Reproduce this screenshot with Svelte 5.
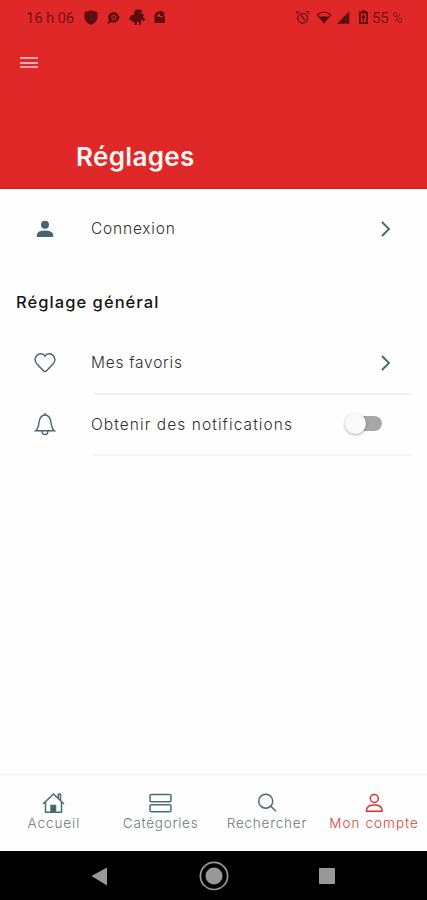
<script>
  const tabs = [
    { id: 'home', label: 'Accueil' },
    { id: 'categories', label: 'Catégories' },
    { id: 'search', label: 'Rechercher' },
    { id: 'account', label: 'Mon compte' }
  ];
  let active = $state('account');
  let notifications = $state(false);
</script>

{#snippet chevron()}
  <svg class="chevron" width="12" height="18" viewBox="0 0 12 18"><path d="M2 2L9 9L2 16" /></svg>
{/snippet}

<div class="screen">
  <header>
    <div class="status">
      <span class="time">16 h 06</span>
      <svg class="left-icons" width="86" height="18" viewBox="0 0 86 18">
        <path d="M7 1.3L13.5 3.3V8.5Q13 13.5 7 16Q1 13.5.5 8.5V3.3Z" />
        <path fill-rule="evenodd" d="M29.5 3A5.5 5.5 0 0 1 34.5 7L36 8L34.8 9.5A5.5 5.5 0 0 1 26.7 13L24 15L23.5 13.3L25 11.5A5.5 5.5 0 0 1 29.5 3ZM29.8 6A2.5 2.5 0 1 0 29.8 11A2.5 2.5 0 1 0 29.8 6Z" />
        <circle cx="29.8" cy="8.5" r="1.5" />
        <path d="M50 3L52 .7L57 .5L58.5 3L56 4L60 5.5L59 8L61.5 11L59 12L57 11L57 16H54.8L55 13H52.8L53 16H50.5L50.8 13L48.5 13L47.5 11.5L45 10.5L46.5 7L50 5.5Z" />
        <path fill-rule="evenodd" d="M72.5 3.2L77 1.7L80.5 4L80 6.5L81 8.5V14H70.5V6ZM74 5L73 8.5L75.5 7.5L78.5 9V7H76V5Z" />
      </svg>
      <span class="grow"></span>
      <svg class="right-icons" width="74" height="18" viewBox="0 0 74 18">
        <g fill="none" stroke="#7b1314" stroke-width="1.4">
          <circle cx="6.7" cy="9.3" r="4.9" />
          <path d="M1 5V2.6H4M12.4 5V2.6H9.4M5.3 6L8.3 10.5V12" />
          <path d="M21.3 6.1Q28 0 34.7 6.1L28 13.2Z" />
        </g>
        <path d="M23.3 8.2Q28 6.5 32.7 8.2L28 14.5Z" />
        <path d="M41 14.8L53.3 2.3V14.8Z" />
        <path fill-rule="evenodd" d="M65 1.5H70V2.7H72V15H63V2.7H65ZM64.8 4.5V13.3H70.2V4.5ZM67.4 5L69.5 8.2L68.3 9L68 13H66.8V10L65.5 8.8Z" />
      </svg>
      <span class="battery">55 <i>%</i></span>
    </div>
    <button class="menu" aria-label="Menu"><span></span><span></span><span></span></button>
    <h1>Réglages</h1>
  </header>

  <main>
    <div class="row login">
      <svg class="lead" width="20" height="20" viewBox="0 0 20 20"><circle cx="10" cy="5.8" r="4" fill="#456570" /><path d="M1.8 18V15.7Q2.8 11.5 10 11.5Q17.2 11.5 18.2 15.7V18Z" fill="#456570" /></svg>
      <span class="label connexion">Connexion</span>
      {@render chevron()}
    </div>
    <h2>Réglage général</h2>
    <div class="row ruled fav">
      <svg class="lead outline" width="22" height="22" viewBox="0 0 22 22"><path d="M11 4.2C9.5 1.2 5 1 2.6 3.7C.3 6.5 1 9.8 3.2 12.2L8.7 18Q11 21 13.3 18L18.8 12.2C21 9.8 21.7 6.5 19.4 3.7C17 1 12.5 1.2 11 4.2Z" /></svg>
      <span class="label favoris">Mes favoris</span>
      {@render chevron()}
    </div>
    <div class="row ruled notif">
      <svg class="lead outline" width="22" height="24" viewBox="0 0 22 24"><path d="M11 1V3M1.7 18.8C4.5 16.5 4.6 13.5 5 10.5C5.7 5.5 8 3 11 3S16.3 5.5 17 10.5C17.4 13.5 17.5 16.5 20.3 18.8ZM8 19C8.3 23.7 13.7 23.7 14 19" /></svg>
      <span class="label obtenir">Obtenir des notifications</span>
      <button class="switch" class:on={notifications} aria-label="Obtenir des notifications" onclick={() => (notifications = !notifications)}><span></span></button>
    </div>
  </main>

  <nav>
    {#each tabs as tab}
      <button class="tab {tab.id}" class:active={active === tab.id} onclick={() => (active = tab.id)}>
        <svg width="24" height="22" viewBox="0 0 24 22">
          {#if tab.id === 'home'}
            <path d="M2 12L12.5 2L23 12M4.5 10V20.3H20.5V10M17.3 6V2.2H19.5V8.5" /><path class="solid" d="M10 20V13.5H14.5V20Z" />
          {:else if tab.id === 'categories'}
            <rect x="2" y="2.5" width="21" height="7.3" rx="1.4" /><rect x="2" y="12.7" width="21" height="7" rx="1.4" />
          {:else if tab.id === 'search'}
            <circle cx="10.7" cy="9.2" r="7" /><path d="M15.8 14.3L21 19.3" />
          {:else}
            <circle cx="12.3" cy="6.5" r="4" /><path d="M4.6 19.2V17.5Q5.3 13 12.3 13Q19.3 13 20 17.5V19.2Z" />
          {/if}
        </svg>
        <span class="tab-label">{tab.label}</span>
      </button>
    {/each}
  </nav>

  <footer>
    <svg width="427" height="49" viewBox="0 0 427 49">
      <path d="M91.5 25L107 16.5V34.5Z" fill="#999" />
      <circle cx="214" cy="24.9" r="13.6" fill="none" stroke="#999" stroke-width="1.7" />
      <circle cx="214" cy="24.9" r="8.5" fill="#999" />
      <rect x="319" y="17" width="16" height="16" rx="1" fill="#999" />
    </svg>
  </footer>
</div>

<style>
  :global(body) { margin: 0; background: #fefefe; }
  .screen { width: 427px; height: 900px; display: flex; flex-direction: column; overflow: hidden; background: #fefefe; font-family: Inter, "Open Sans", sans-serif; color: #303030; }
  button { border: 0; padding: 0; background: none; font: inherit; }
  header { height: 189px; border-bottom: 1px solid #cf2020; box-sizing: border-box; background: #df2827; flex: none; }
  .status { height: 36px; box-sizing: border-box; padding: 0 24px 0 26px; display: flex; align-items: center; font-family: Roboto, sans-serif; font-size: 15px; color: #7b1314; }
  .status svg { fill: #5c0d0e; flex: none; }
  .time { width: 58px; letter-spacing: -.2px; white-space: nowrap; }
  .grow { flex: 1; }
  .battery { width: 31px; letter-spacing: -.1px; white-space: nowrap; }
  .battery i { font-style: normal; font-size: 14px; opacity: .8; }
  .right-icons { margin-right: 2px; }
  .menu { display: flex; flex-direction: column; gap: 2.5px; margin: 21px 0 0 20px; width: 18px; }
  .menu span { height: 2px; background: #f8aaa8; }
  h1 { margin: 73px 0 0 76px; font-size: 26px; line-height: 32px; font-weight: 600; letter-spacing: .35px; color: #fff5f3; }
  main { flex: 1; }
  .row { display: flex; align-items: center; box-sizing: border-box; padding: 0 35px 0 34px; height: 61px; }
  .login { height: 80px; }
  .lead { width: 22px; flex: none; }
  .outline { fill: none; stroke: #456570; stroke-width: 1.4; }
  .label { margin-left: 35px; flex: 1; white-space: nowrap; font-size: 15.5px; line-height: 20px; font-weight: 300; letter-spacing: .8px; }
  .favoris { letter-spacing: .74px; }
  .obtenir { letter-spacing: 1.07px; }
  .chevron { fill: none; stroke: #46656f; stroke-width: 1.8; }
  h2 { margin: 21px 0 0 16px; font-size: 16.5px; line-height: 24px; font-weight: 500; letter-spacing: 1.05px; color: #151515; }
  .fav { margin-top: 18px; height: 63px; padding-bottom: 2px; }
  .notif { height: 61px; padding-bottom: 2px; }
  .notif .lead { margin-bottom: 1px; }
  .ruled { background: linear-gradient(#f2f2f2, #f2f2f2) 94px 100% / 318px 2px no-repeat; }
  .switch { width: 38px; height: 22px; margin: 0 9px 2px 0; display: flex; align-items: center; }
  .switch::after { content: ""; width: 25px; height: 15px; margin-left: -9px; border-radius: 0 8px 8px 0; background: #a7a7a7; }
  .switch span { width: 21px; height: 21px; border-radius: 50%; background: #fafafa; box-shadow: 0 1px 3px #0005; z-index: 1; }
  .switch.on { flex-direction: row-reverse; }
  nav { height: 78px; border-top: 3px solid #f8f8f8; box-sizing: border-box; display: flex; flex: none; }
  .tab { flex: 1 1 0; min-width: 0; display: flex; flex-direction: column; align-items: center; justify-content: flex-start; padding-top: 15.5px; box-sizing: border-box; color: #687a80; white-space: nowrap; }
  .tab svg { flex: none; fill: none; stroke: #4b6b75; stroke-width: 1.5; }
  .tab .solid { fill: #416570; }
  .tab.active { color: #df4038; }
  .tab.active svg { stroke: #df3028; }
  .tab-label { font-size: 13.5px; line-height: 18px; margin-top: .5px; font-weight: 300; letter-spacing: .8px; }
  .home .tab-label { letter-spacing: .95px; margin-left: 1px; }
  .categories .tab-label { letter-spacing: .75px; margin-left: 1px; }
  .account .tab-label { letter-spacing: 1.05px; margin-left: 1px; }
  footer { height: 49px; background: #000; flex: none; }
  footer svg { display: block; }
</style>
